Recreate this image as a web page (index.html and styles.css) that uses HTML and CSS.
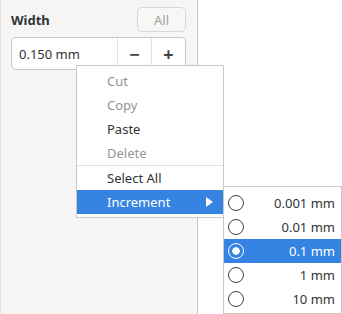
FILE: index.html
```html
<!DOCTYPE html>
<html lang="en">
<head>
<meta charset="UTF-8" />
<title>Width – Increment</title>
<link rel="stylesheet" href="styles.css">
</head>
<body>
  <div class="window">
    <!-- SIDEBAR -->
    <aside class="sidebar">
      <div class="row">
        <span class="label">Width</span>
        <button class="btn" disabled>All</button>
      </div>
      <div class="spin">
        <span class="spin-text">0.150 mm</span>
        <span class="spin-btn">&minus;</span>
        <span class="spin-btn">+</span>
      </div>
    </aside>
    <div class="canvas"></div>

    <!-- CONTEXT MENU -->
    <div class="menu main-menu">
      <div class="item disabled">Cut</div>
      <div class="item disabled">Copy</div>
      <div class="item">Paste</div>
      <div class="item disabled">Delete</div>
      <div class="sep"></div>
      <div class="item">Select All</div>
      <div class="item active">Increment <span class="arrow"></span></div>
    </div>

    <!-- INCREMENT SUBMENU -->
    <div class="menu submenu">
      <div class="item radio-item"><span class="radio"></span><span>0.001 mm</span></div>
      <div class="item radio-item"><span class="radio"></span><span>0.01 mm</span></div>
      <div class="item radio-item active"><span class="radio checked"></span><span>0.1 mm</span></div>
      <div class="item radio-item"><span class="radio"></span><span>1 mm</span></div>
      <div class="item radio-item"><span class="radio"></span><span>10 mm</span></div>
    </div>
  </div>
</body>
</html>
```

FILE: styles.css
```css
:root {
  --fg: #2e3436;
  --dim: #929595;
  --panel: #f6f5f4;
  --border: #cdc7c2;
  --accent: #3584e4;
  --font: 'Noto Sans', 'Liberation Sans', sans-serif;
}

* {
  box-sizing: border-box;
}

html,
body {
  margin: 0;
  padding: 0;
  background: #fff;
  color: var(--fg);
  font-family: var(--font);
  font-size: 13px;
}

.window {
  position: relative;
  display: flex;
  width: 342px;
  height: 314px;
  overflow: hidden;
}

/* ------------ SIDEBAR ------------- */
.sidebar {
  width: 198px;
  height: 100%;
  background: var(--panel);
  border-left: 1px solid #e6e3e0;
  border-right: 1px solid var(--border);
  padding: 7px 11px 0 10px;
}
.canvas { flex: 1; }

.row {
  display: flex;
  align-items: center;
  justify-content: space-between;
  height: 25px;
}
.label { font-weight: bold; }

.btn {
  width: 49px;
  height: 25px;
  border: 1px solid #dad6d2;
  border-radius: 5px;
  background: #f8f7f6;
  color: #a0a2a2;
  font-family: var(--font);
  font-size: 13px;
  padding: 0;
}

.spin {
  display: flex;
  margin-top: 5px;
  height: 33px;
  background: #fff;
  border: 1px solid var(--border);
  border-radius: 5px;
}
.spin-text {
  flex: 1;
  display: flex;
  align-items: center;
  padding-left: 7px;
}
.spin-btn {
  width: 34px;
  display: flex;
  align-items: center;
  justify-content: center;
  border-left: 1px solid #e4e1de;
  font-size: 18px;
  font-weight: bold;
  color: #3d4244;
}

/* ------------ MENUS ------------- */
.menu {
  position: absolute;
  background: #fff;
  border: 1px solid var(--border);
}
.main-menu {
  left: 76px;
  top: 65px;
  width: 148px;
  padding: 3px 0;
}
.submenu {
  left: 223px;
  top: 186px;
  width: 119px;
  height: 128px;
  padding: 4px 0 2px;
}

.item {
  display: flex;
  align-items: center;
  height: 24px;
  padding-left: 30px;
}
.item.disabled { color: var(--dim); }
.item.active {
  background: var(--accent);
  color: #fff;
}
.sep {
  height: 1px;
  background: #e2dfdc;
}

.arrow {
  margin-left: auto;
  margin-right: 10px;
  width: 0;
  height: 0;
  border-top: 5px solid transparent;
  border-bottom: 5px solid transparent;
  border-left: 7px solid #fff;
}

.radio-item {
  justify-content: space-between;
  padding: 0 6px 0 4px;
}
.radio {
  width: 16px;
  height: 16px;
  border: 1.5px solid #3d4244;
  border-radius: 50%;
  background: #fff;
}
.radio.checked {
  border-color: #fff;
  background: radial-gradient(circle, #fff 0 3.5px, var(--accent) 4px);
}
```
